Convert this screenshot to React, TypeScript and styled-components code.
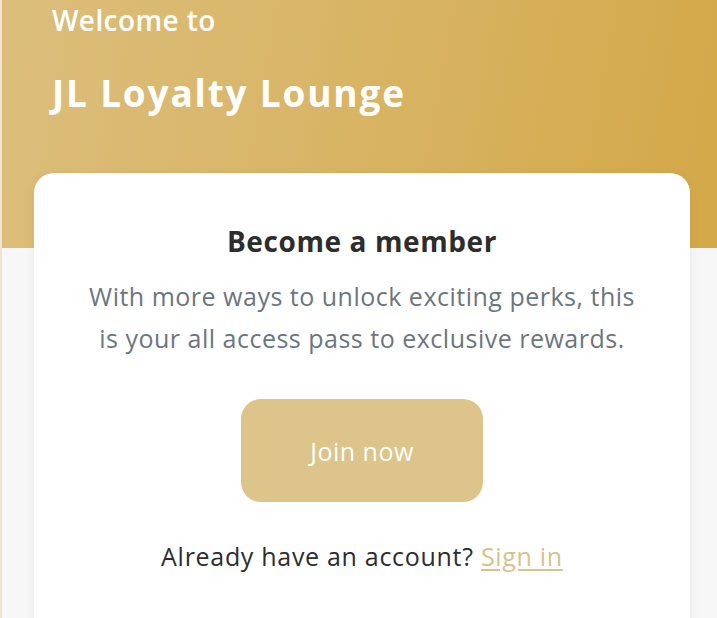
import React from "react";
import styled, { createGlobalStyle } from "styled-components";

const Global = createGlobalStyle`
  html, body { margin: 0; padding: 0; }
  body { background: #f7f7f8; font-family: "Open Sans", "Lato", sans-serif; }
`;

const Page = styled.div`
  position: relative;
  min-height: 618px;
  border-left: 2px solid #efe6cf;
  overflow: hidden;
`;

const Hero = styled.header`
  height: 248px;
  background: linear-gradient(100deg, #dcbe7c 0%, #d8b464 50%, #d3a848 100%);
  padding: 3px 0 0 50px;
  box-sizing: border-box;
`;

const Welcome = styled.div`
  color: #fff;
  font-size: 28px;
  font-weight: 600;
  line-height: 34px;
  letter-spacing: 0.4px;
`;

const Title = styled.h1`
  margin: 33px 0 0;
  color: #fff;
  font-size: 37px;
  font-weight: 700;
  line-height: 46px;
  letter-spacing: 1.8px;
`;

const Card = styled.section`
  margin: -75px 0 0 32px;
  width: 656px;
  height: 520px;
  background: #fff;
  border-radius: 20px;
  box-shadow: 0 2px 12px rgba(0, 0, 0, 0.05);
  box-sizing: border-box;
  padding: 50px 20px 0;
  display: flex;
  flex-direction: column;
  align-items: center;
  text-align: center;
`;

const Heading = styled.h2`
  margin: 0;
  color: #2d2d2d;
  font-size: 28px;
  font-weight: 700;
  line-height: 36px;
  letter-spacing: 0.6px;
`;

const Lead = styled.p`
  margin: 16px 0 0;
  color: #6b767e;
  font-size: 25px;
  line-height: 42px;
  letter-spacing: 0.5px;
`;

const JoinButton = styled.button`
  margin-top: 40px;
  width: 242px;
  height: 103px;
  border: none;
  border-radius: 20px;
  background: #dcc48a;
  color: #fff;
  font-family: inherit;
  font-size: 25px;
  letter-spacing: 0.5px;
  cursor: pointer;
`;

const SignInRow = styled.p`
  margin: 37px 0 0;
  color: #2d2d2d;
  font-size: 25px;
  line-height: 34px;
  letter-spacing: 0.7px;
`;

const SignInLink = styled.a`
  color: #d8c18d;
  text-decoration: underline;
  text-underline-offset: 3px;
`;

export default function App() {
  return (
    <>
      <Global />
      <Page>
        <Hero>
          <Welcome>Welcome to</Welcome>
          <Title>JL Loyalty Lounge</Title>
        </Hero>
        <Card>
          <Heading>Become a member</Heading>
          <Lead>
            With more ways to unlock exciting perks, this
            <br />
            is your all access pass to exclusive rewards.
          </Lead>
          <JoinButton>Join now</JoinButton>
          <SignInRow>
            Already have an account? <SignInLink href="#">Sign in</SignInLink>
          </SignInRow>
        </Card>
      </Page>
    </>
  );
}
